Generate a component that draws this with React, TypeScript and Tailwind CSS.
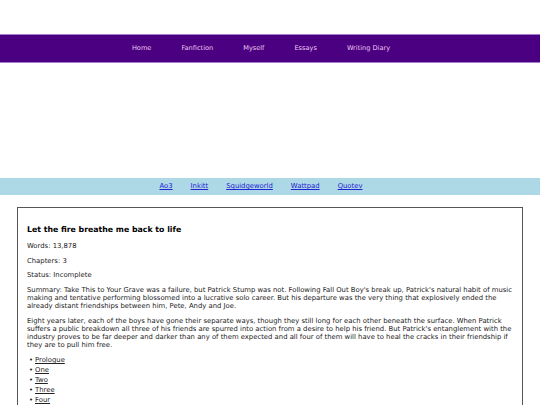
const NAV = ['Home', 'Fanfiction', 'Myself', 'Essays', 'Writing Diary']
const SITES = ['Ao3', 'Inkitt', 'Squidgeworld', 'Wattpad', 'Quotev']
const CHAPTERS = ['Prologue', 'One', 'Two', 'Three', 'Four']

export default function App() {
  return (
    <div className="min-h-[405px] bg-white font-['DejaVu_Sans',Verdana,sans-serif] text-[6.85px] text-[#222]">
      <div className="h-[34px]" />

      {/* main nav */}
      <nav className="h-[29px] bg-[#4b0082] border-y border-[#a77bd0] flex items-center justify-center gap-[30px] pr-[18px]">
        {NAV.map((n) => (
          <a key={n} href="#" className="text-[6.6px] text-[#eccbf0]">
            {n}
          </a>
        ))}
      </nav>

      <div className="h-[115px]" />

      {/* sites */}
      <div className="h-[17px] bg-[#add8e6] flex items-center justify-center gap-[18px] pr-[18px]">
        {SITES.map((s) => (
          <a key={s} href="#" className="text-[#2323d4] underline">
            {s}
          </a>
        ))}
      </div>

      <div className="mx-[17px] mt-[12px] border border-[#555] px-[9px] pt-[9px] pb-[9px] leading-[8px]">
        <h3 className="text-[7.8px] leading-[9.4px] font-bold text-black my-[7.8px]">
          Let the fire breathe me back to life
        </h3>
        <p className="my-[6.67px]">Words: 13,878</p>
        <p className="my-[6.67px]">Chapters: 3</p>
        <p className="my-[6.67px]">Status: Incomplete</p>
        <p className="my-[6.67px]">
          Summary: Take This to Your Grave was a failure, but Patrick Stump was not. Following Fall Out Boy's break up, Patrick's natural habit of music<br />
          making and tentative performing blossomed into a lucrative solo career. But his departure was the very thing that explosively ended the<br />
          already distant friendships between him, Pete, Andy and Joe.
        </p>
        <p className="my-[6.67px]">
          Eight years later, each of the boys have gone their separate ways, though they still long for each other beneath the surface. When Patrick<br />
          suffers a public breakdown all three of his friends are spurred into action from a desire to help his friend. But Patrick's entanglement with the<br />
          industry proves to be far deeper and darker than any of them expected and all four of them will have to heal the cracks in their friendship if<br />
          they are to pull him free.
        </p>
        <ul className="my-[6.67px]">
          {CHAPTERS.map((c) => (
            <li key={c} className="flex leading-[10px]">
              <span className="w-[8px] pl-[2px]">•</span>
              <a href="#" className="underline text-[#222]">
                {c}
              </a>
            </li>
          ))}
        </ul>
      </div>
    </div>
  )
}
